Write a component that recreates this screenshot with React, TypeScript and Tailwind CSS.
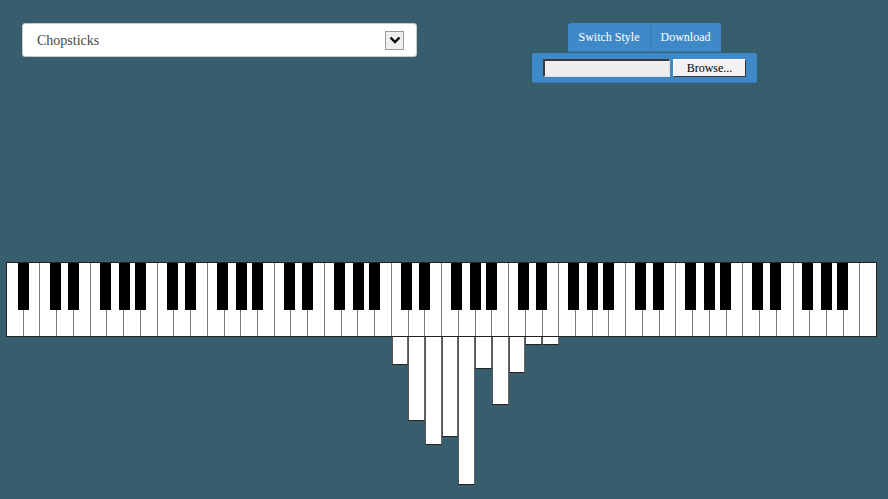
import React from 'react';

const NAMES = ['A', 'B', 'C', 'D', 'E', 'F', 'G'];
const WHITE_COUNT = 52;
const KEY_W = 869 / WHITE_COUNT;

// small shifts so black keys sit like on a real keyboard
const SHIFT: Record<string, number> = { A: 0.3, C: -0.8, D: 0.5, F: -1, G: 1 };

// heights of the note bars hanging below the keyboard, by white key index
const bars: Record<number, number> = {
  23: 28,
  24: 84,
  25: 108,
  26: 100,
  27: 148,
  28: 32,
  29: 68,
  30: 36,
  31: 8,
  32: 8,
};

const whites = Array.from({ length: WHITE_COUNT }, (_, i) => i);
const blacks = whites.filter(
  (i) => i < WHITE_COUNT - 1 && ['A', 'C', 'D', 'F', 'G'].includes(NAMES[i % 7])
);

function Piano() {
  return (
    <div className="ml-[6px] w-[871px]">
      {/* Keys */}
      <div className="relative h-[75px] border border-[#222] bg-white flex">
        {whites.map((i) => (
          <div
            key={i}
            className={`flex-1 h-full bg-white ${i > 0 ? 'border-l border-[#7a7a7a]' : ''}`}
          />
        ))}
        {blacks.map((i) => (
          <div
            key={`b${i}`}
            className="absolute top-0 w-[11px] h-[47px] bg-black"
            style={{ left: (i + 1) * KEY_W - 6 + SHIFT[NAMES[i % 7]] }}
          />
        ))}
      </div>

      {/* Note bars */}
      <div className="flex px-px">
        {whites.map((i) => (
          <div key={i} className="flex-1">
            {bars[i] ? (
              <div
                className="bg-white border-l border-r border-b border-l-[#555] border-r-[#666] border-b-[#222]"
                style={{ height: bars[i] }}
              />
            ) : null}
          </div>
        ))}
      </div>
    </div>
  );
}

export default function App() {
  return (
    <div className="w-[888px] h-[499px] overflow-hidden bg-[#365e6c] font-['Liberation_Serif',serif]">
      <div className="flex items-start pt-[23px] pl-[22px]">
        {/* Song select */}
        <div className="w-[395px] h-[34px] bg-white rounded-[3px] border border-[#c8c8c8] flex items-center justify-between pl-[14px] pr-[12px]">
          <span className="text-[14px] text-[#444] font-['Liberation_Serif',serif]">Chopsticks</span>
          <div className="w-[19px] h-[19px] bg-[#efefef] border border-[#999] flex items-center justify-center">
            <svg width="12" height="8" viewBox="0 0 12 8">
              <path d="M1.5 1.5 L6 6 L10.5 1.5" fill="none" stroke="#000" strokeWidth="2.4" />
            </svg>
          </div>
        </div>

        {/* Controls */}
        <div className="ml-[115px] w-[225px] flex flex-col items-center">
          <div className="flex h-[29px] bg-[#3f89c8] rounded-t-[3px] border-b border-[#3a7db6] text-white text-[12px]">
            <div className="px-[10px] flex items-center border-r border-[#3779b0]">Switch Style</div>
            <div className="px-[10px] flex items-center">Download</div>
          </div>
          <div className="mt-px w-full h-[30px] bg-[#3f89c8] rounded-[3px] border-b border-[#3a7db6] flex items-center pl-[11px] gap-[3px]">
            <div className="w-[127px] h-[18px] bg-[#eeeeee] border-t-2 border-l-2 border-[#3a3a3a] border-b border-r border-b-[#e0e0e0] border-r-[#e0e0e0]" />
            <div className="w-[73px] h-[18px] bg-[#f2f2f2] border border-t-white border-l-white border-b-[#333] border-r-[#333] flex items-center justify-center text-[12px] text-black">
              Browse...
            </div>
          </div>
        </div>
      </div>

      <div className="mt-[179px]">
        <Piano />
      </div>
    </div>
  );
}
